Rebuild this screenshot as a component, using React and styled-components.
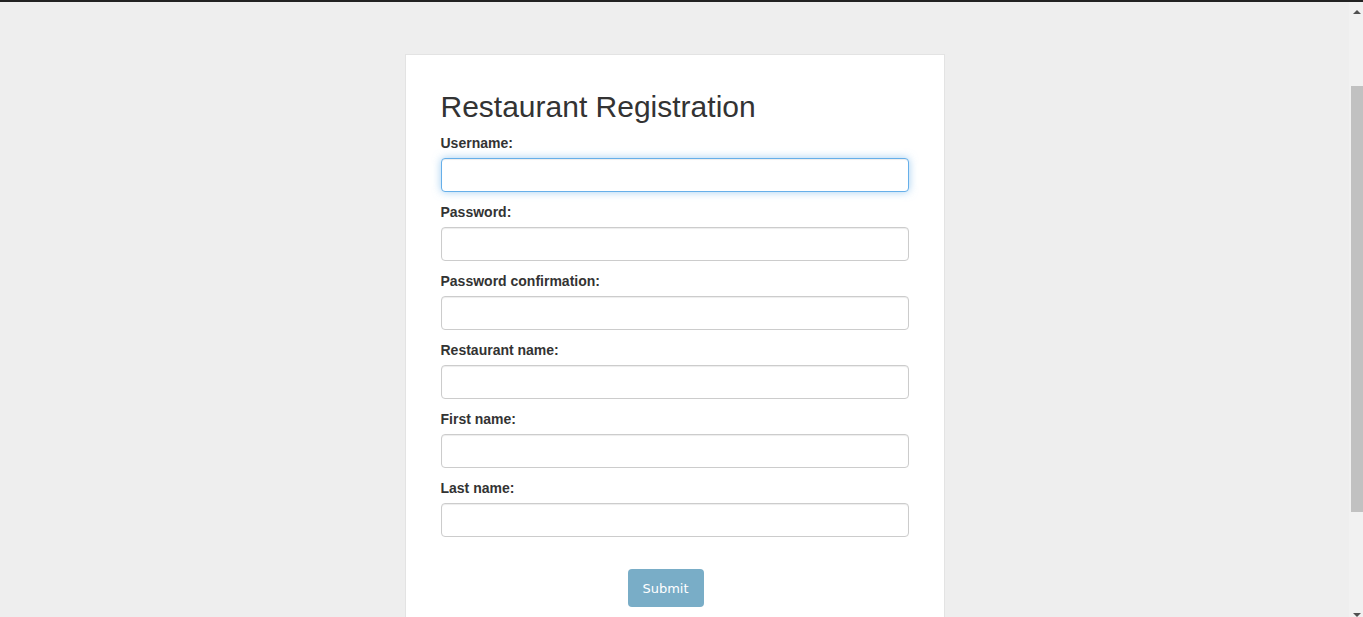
import React from 'react';
import styled, { createGlobalStyle } from 'styled-components';

const GlobalStyle = createGlobalStyle`
  html, body {
    margin: 0;
    padding: 0;
  }
  body {
    background: #eeeeee;
    border-top: 2px solid #222222;
    font-family: "Liberation Sans", Arial, sans-serif;
    font-size: 14px;
    color: #333333;
  }
  * {
    box-sizing: border-box;
  }
`;

const Page = styled.div`
  display: flex;
  justify-content: center;
  padding: 52px 14px 0 0;
`;

const Card = styled.div`
  width: 540px;
  background: #ffffff;
  border: 1px solid #e3e3e3;
  padding: 35px;
`;

const Title = styled.h1`
  margin: 0 0 10px;
  font-size: 30px;
  font-weight: 400;
  line-height: 1.1;
  color: #333333;
`;

const Form = styled.form`
  display: flex;
  flex-direction: column;
  gap: 10px;
`;

const Group = styled.div`
  display: flex;
  flex-direction: column;
  gap: 5px;
`;

const Label = styled.label`
  font-weight: 700;
  font-size: 14px;
  line-height: 20px;
`;

const Input = styled.input`
  width: 100%;
  height: 34px;
  padding: 6px 12px;
  font-family: inherit;
  font-size: 14px;
  color: #555555;
  background: #ffffff;
  border: 1px solid #cccccc;
  border-radius: 4px;
  box-shadow: inset 0 1px 1px rgba(0, 0, 0, 0.075);
  outline: none;

  &:focus {
    border-color: #66afe9;
    box-shadow: inset 0 1px 1px rgba(0, 0, 0, 0.075), 0 0 8px rgba(102, 175, 233, 0.6);
  }
`;

const Actions = styled.div`
  display: flex;
  padding: 22px 0 0 187px;
`;

const Submit = styled.button`
  width: 76px;
  height: 38px;
  padding: 0;
  border: none;
  border-radius: 4px;
  background: #79adc7;
  color: #ffffff;
  font-family: "DejaVu Sans", Verdana, sans-serif;
  font-size: 13px;
  cursor: pointer;
`;

/* window scrollbar, drawn over the right edge */
const ScrollRail = styled.div`
  position: fixed;
  top: 2px;
  right: 0;
  bottom: 0;
  width: 14px;
  display: flex;
  flex-direction: column;
  align-items: flex-end;
  padding-top: 8px;
  background: #f1f1f1;
`;

const Arrow = styled.span`
  width: 0;
  height: 0;
  margin-right: 2px;
  border-left: 4px solid transparent;
  border-right: 4px solid transparent;
  ${(p) => (p.$down
    ? 'margin-top: auto; border-top: 4px solid #505050;'
    : 'border-bottom: 4px solid #505050;')}
`;

const Thumb = styled.div`
  width: 12px;
  height: 426px;
  margin-top: 72px;
  background: #c1c1c1;
`;

const fields = [
  { id: 'username', label: 'Username:', type: 'text' },
  { id: 'password', label: 'Password:', type: 'password' },
  { id: 'password_confirmation', label: 'Password confirmation:', type: 'password' },
  { id: 'restaurant_name', label: 'Restaurant name:', type: 'text' },
  { id: 'first_name', label: 'First name:', type: 'text' },
  { id: 'last_name', label: 'Last name:', type: 'text' },
];

const App = () => (
  <>
    <GlobalStyle />
    <Page>
      <Card>
        <Title>Restaurant Registration</Title>
        <Form onSubmit={(e) => e.preventDefault()}>
          {fields.map((f, i) => (
            <Group key={f.id}>
              <Label htmlFor={f.id}>{f.label}</Label>
              <Input id={f.id} type={f.type} autoFocus={i === 0} />
            </Group>
          ))}
          <Actions>
            <Submit type="submit">Submit</Submit>
          </Actions>
        </Form>
      </Card>
    </Page>
    <ScrollRail>
      <Arrow />
      <Thumb />
      <Arrow $down />
    </ScrollRail>
  </>
);

export default App;
